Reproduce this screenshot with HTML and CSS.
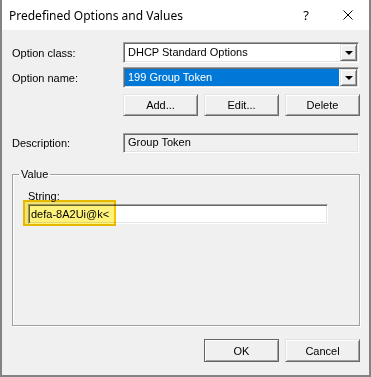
FILE: index.html
```html
<!DOCTYPE html>
<html lang="en">
<head>
    <meta charset="UTF-8">
    <title>Predefined Options and Values</title>
    <link rel="stylesheet" href="styles.css">
</head>
<body>
    <div class="window">
        <!-- Barra de titulo -->
        <div class="titlebar">
            <span class="title">Predefined Options and Values</span>
            <span class="help">?</span>
            <svg class="close" width="10" height="10" viewBox="0 0 10 10">
                <path d="M0.5 0.5 L9.5 9.5 M9.5 0.5 L0.5 9.5" stroke="#000" stroke-width="1" fill="none"/>
            </svg>
        </div>

        <div class="content">
            <div class="row">
                <label class="lbl">Option class:</label>
                <div class="combo">
                    <span class="combo-text">DHCP Standard Options</span>
                    <span class="drop"><i class="arrow"></i></span>
                </div>
            </div>
            <div class="row row-name">
                <label class="lbl">Option name:</label>
                <div class="combo">
                    <span class="combo-text selected">199 Group Token</span>
                    <span class="drop"><i class="arrow"></i></span>
                </div>
            </div>
            <div class="row row-buttons">
                <button class="btn">Add...</button>
                <button class="btn">Edit...</button>
                <button class="btn">Delete</button>
            </div>
            <div class="row row-desc">
                <label class="lbl">Description:</label>
                <div class="readonly">Group Token</div>
            </div>

            <!-- Grupo de valor -->
            <fieldset class="group">
                <legend>Value</legend>
                <label class="string-lbl">String:</label>
                <div class="field-wrap">
                    <div class="textbox">defa-8A2Ui@k&lt;</div>
                    <span class="highlight"></span>
                </div>
            </fieldset>

            <div class="footer">
                <button class="btn btn-default">OK</button>
                <button class="btn">Cancel</button>
            </div>
        </div>
    </div>
</body>
</html>
```

FILE: styles.css
```css
body {
    margin: 0;
    padding: 0;
    background-color: #fff;
    font-family: 'Liberation Sans', Arial, sans-serif;
    font-size: 11px;
    color: #000;
}
.window {
    width: 371px;
    height: 377px;
    box-sizing: border-box;
    border: 2px solid #838383;
    border-top: none;
    background-color: #f0f0f0;
    display: flex;
    flex-direction: column;
}
.titlebar {
    height: 30px;
    background-color: #fff;
    display: flex;
    align-items: center;
    padding-left: 7px;
}
.title {
    font-family: 'Noto Sans', sans-serif;
    font-size: 12px;
    flex: 1;
}
.help {
    font-family: 'Noto Sans', sans-serif;
    font-size: 13px;
    margin-right: 34px;
}
.close {
    margin-right: 16px;
}
.content {
    padding: 12px 9px 0 10px;
}
.row {
    display: flex;
    align-items: center;
}
.lbl {
    width: 111px;
}
.row-name {
    margin-top: 4px;
}
.row-buttons {
    margin-top: 6px;
    justify-content: flex-end;
    gap: 6px;
}
.row-desc {
    margin-top: 17px;
}
.combo {
    width: 236px;
    height: 21px;
    box-sizing: border-box;
    border: 1px solid;
    border-color: #a0a0a0 #fff #fff #a0a0a0;
    box-shadow: inset 1px 1px 0 #696969, inset -1px -1px 0 #e3e3e3;
    background-color: #fff;
    display: flex;
    align-items: stretch;
    padding: 1px;
}
.combo-text {
    flex: 1;
    padding-left: 3px;
    line-height: 17px;
}
.combo-text.selected {
    background-color: #0078d7;
    color: #fff;
    margin-right: 1px;
}
.drop {
    width: 17px;
    box-sizing: border-box;
    background-color: #f0f0f0;
    border: 1px solid;
    border-color: #e3e3e3 #696969 #696969 #e3e3e3;
    box-shadow: inset 1px 1px 0 #fff, inset -1px -1px 0 #a0a0a0;
    display: flex;
    align-items: center;
    justify-content: center;
}
.arrow {
    width: 0;
    height: 0;
    border-left: 4px solid transparent;
    border-right: 4px solid transparent;
    border-top: 4px solid #000;
    margin-top: 1px;
}
.btn {
    width: 75px;
    height: 22px;
    box-sizing: border-box;
    font-family: 'Liberation Sans', Arial, sans-serif;
    font-size: 11px;
    color: #000;
    background-color: #f0f0f0;
    border: 1px solid;
    border-color: #e3e3e3 #696969 #696969 #e3e3e3;
    box-shadow: inset 1px 1px 0 #fff, inset -1px -1px 0 #a0a0a0;
    padding: 0;
}
.readonly {
    width: 236px;
    height: 20px;
    box-sizing: border-box;
    border: 1px solid;
    border-color: #a0a0a0 #fff #fff #a0a0a0;
    box-shadow: inset 1px 1px 0 #696969, inset -1px -1px 0 #e3e3e3;
    padding: 2px 0 0 4px;
}
.group {
    margin: 15px 0 0 0;
    padding: 0 0 0 15px;
    height: 158px;
    box-sizing: border-box;
    border: 1px solid #a0a0a0;
    box-shadow: inset 1px 1px 0 #fff, 1px 1px 0 #fff;
    min-width: 0;
}
.group legend {
    margin-left: -9px;
    padding: 0 2px;
    font-size: 11px;
}
.string-lbl {
    display: block;
    margin-top: 10px;
}
.field-wrap {
    position: relative;
    width: 300px;
    margin-top: 2px;
}
.textbox {
    height: 20px;
    box-sizing: border-box;
    border: 1px solid;
    border-color: #a0a0a0 #fff #fff #a0a0a0;
    box-shadow: inset 1px 1px 0 #696969, inset -1px -1px 0 #e3e3e3;
    background-color: #fff;
    padding: 3px 0 0 2px;
}
.highlight {
    position: absolute;
    left: -5px;
    top: -4px;
    width: 93px;
    height: 26px;
    box-sizing: border-box;
    background-color: #fff27a;
    border: 2px solid #f5c400;
    mix-blend-mode: multiply;
}
.footer {
    display: flex;
    justify-content: flex-end;
    gap: 6px;
    margin-top: 13px;
}
.footer .btn {
    height: 23px;
}
.btn-default {
    outline: 1px solid #646464;
    outline-offset: -1px;
}
```
